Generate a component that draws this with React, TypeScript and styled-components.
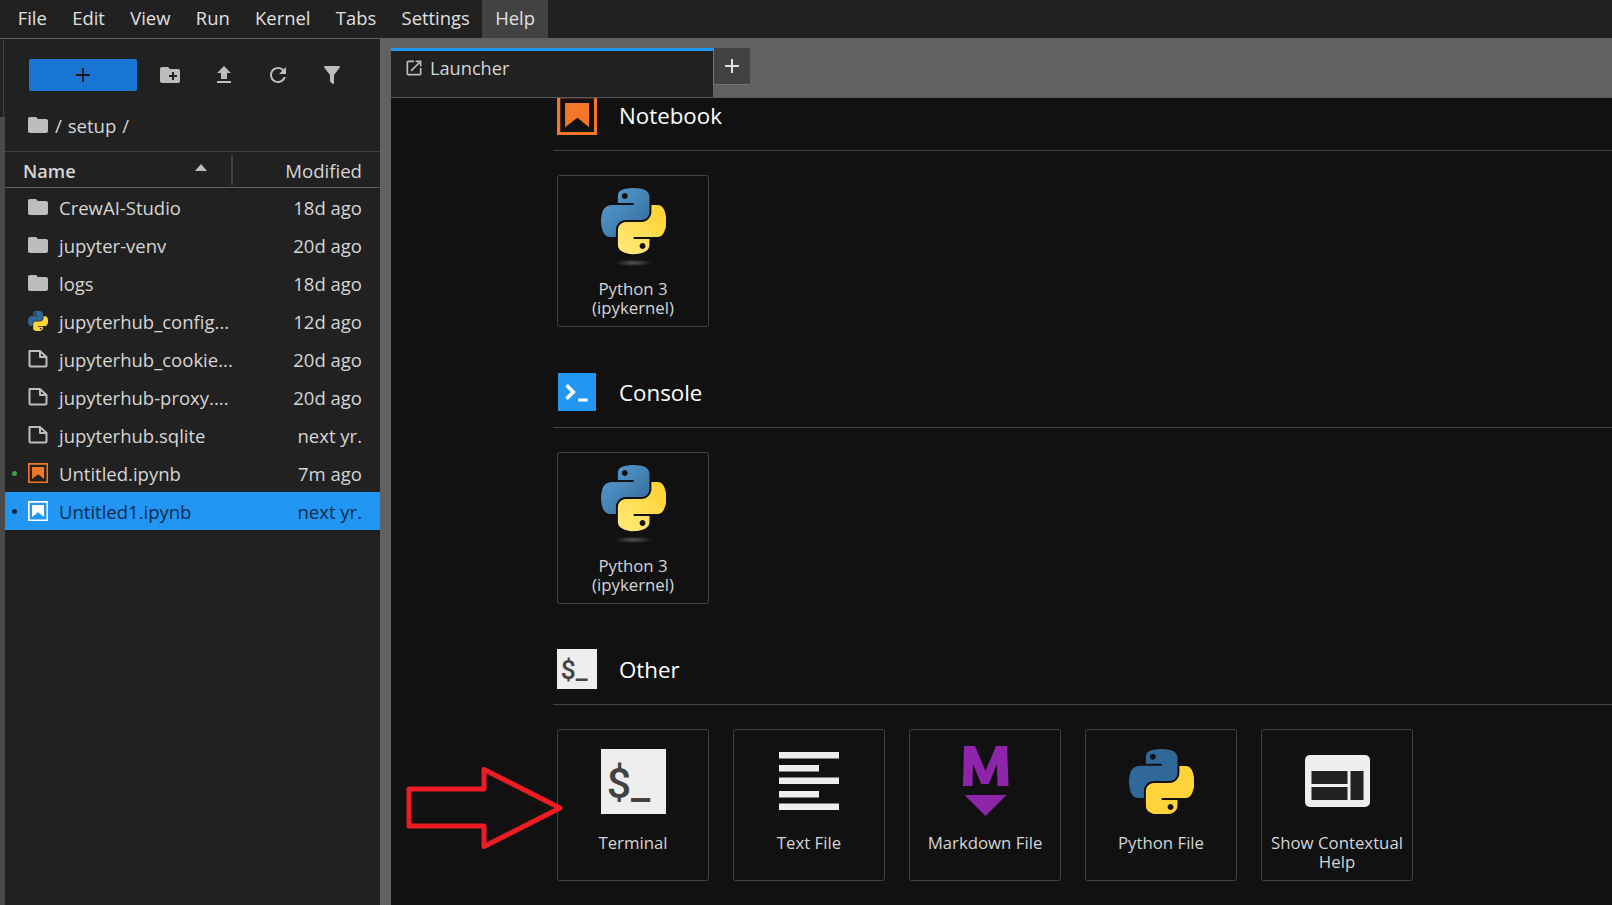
import React from "react";
import styled, { createGlobalStyle } from "styled-components";

const FONT = `"Open Sans", "Noto Sans", sans-serif`;

const Global = createGlobalStyle`
  html, body { margin: 0; padding: 0; background: #111; }
  body { font-family: ${FONT}; }
  #root { width: 1612px; height: 905px; overflow: hidden; }
  * { box-sizing: border-box; }
`;

const Page = styled.div`
  position: relative;
  width: 1612px;
  height: 905px;
  display: flex;
  flex-direction: column;
  background: #616161;
  overflow: hidden;
`;

const MenuBar = styled.div`
  height: 39px;
  flex: none;
  display: flex;
  padding-left: 5px;
  background: #212121;
  border-bottom: 1px solid #616161;
`;

const MenuItem = styled.div<{ $active?: boolean }>`
  height: 38px;
  line-height: 36px;
  padding: 0 12.7px;
  font-size: 18.4px;
  color: #e0e0e0;
  background: ${(p) => (p.$active ? "#424242" : "transparent")};
`;

const Body = styled.div`
  flex: 1;
  display: flex;
  min-height: 0;
`;

const Gutter = styled.div`
  width: 5px;
  flex: none;
  background: #212121;
  display: flex;
  flex-direction: column;
`;

const GutterLine = styled.div`
  width: 1px;
  height: 78px;
  flex: none;
  margin-left: 3px;
  background: #424242;
`;

const GutterStrip = styled.div`
  flex: 1;
  background: #4a4a4a;
`;

const Sidebar = styled.aside`
  width: 375px;
  flex: none;
  background: #212121;
  display: flex;
  flex-direction: column;
`;

const SideToolbar = styled.div`
  height: 72px;
  flex: none;
  padding: 20px 0 0 24px;
  display: flex;
  align-items: flex-start;
`;

const NewButton = styled.div`
  width: 108px;
  height: 32px;
  border-radius: 2px;
  background: #1976d2;
  display: flex;
  align-items: center;
  justify-content: center;
  margin-right: 6px;
`;

const ToolIcon = styled.div`
  width: 54px;
  height: 32px;
  display: flex;
  align-items: center;
  justify-content: center;
  flex: none;
`;

const Crumbs = styled.div`
  height: 41px;
  flex: none;
  padding: 0 0 12px 21px;
  display: flex;
  align-items: center;
  gap: 5px;
  font-size: 18.6px;
  word-spacing: 1px;
  color: #d5d5d5;
  border-bottom: 1px solid #424242;
`;

const ListHead = styled.div`
  height: 36px;
  flex: none;
  display: flex;
  align-items: center;
  padding-top: 2px;
  font-size: 18.6px;
  color: #d5d5d5;
  border-bottom: 1px solid #616161;
`;

const NameHead = styled.div`
  width: 228px;
  height: 29px;
  flex: none;
  padding: 0 24px 0 18px;
  display: flex;
  align-items: center;
  justify-content: space-between;
  font-weight: 600;
  font-size: 18.2px;
  border-right: 2px solid #424242;
`;

const Caret = styled.div`
  width: 0;
  height: 0;
  border-left: 6.5px solid transparent;
  border-right: 6.5px solid transparent;
  border-bottom: 7px solid #bdbdbd;
  margin-top: -6px;
`;

const ModifiedHead = styled.div`
  flex: 1;
  text-align: right;
  padding-right: 18px;
`;

const Row = styled.div<{ $selected?: boolean }>`
  height: 38px;
  display: flex;
  align-items: center;
  font-size: 18.5px;
  color: ${(p) => (p.$selected ? "#0b2a4a" : "#d5d5d5")};
  background: ${(p) => (p.$selected ? "#2196f3" : "transparent")};
`;

const Dot = styled.div<{ $color?: string }>`
  width: 5px;
  height: 5px;
  border-radius: 50%;
  margin-left: 7px;
  flex: none;
  background: ${(p) => p.$color || "transparent"};
`;

const RowIcon = styled.div`
  width: 24px;
  height: 24px;
  margin-left: 9px;
  margin-right: 9px;
  flex: none;
  display: flex;
  align-items: center;
  justify-content: center;
`;

const RowName = styled.div`
  flex: 1;
  min-width: 0;
  padding-top: 1px;
  white-space: nowrap;
`;

const RowTime = styled.div`
  flex: none;
  padding: 1px 18px 0 0;
`;

const Splitter = styled.div`
  width: 11px;
  flex: none;
  background: #616161;
`;

const Main = styled.main`
  flex: 1;
  min-width: 0;
  display: flex;
  flex-direction: column;
`;

const TabBar = styled.div`
  height: 59px;
  flex: none;
  padding-top: 9px;
  display: flex;
  align-items: flex-start;
  background: #616161;
  border-bottom: 1px solid #5a5a5a;
`;

const Tab = styled.div`
  width: 322px;
  height: 49px;
  background: #212121;
  border-top: 3px solid #2196f3;
  display: flex;
  align-items: center;
  padding: 0 0 12px 13px;
  gap: 6px;
  font-size: 18.2px;
  color: #d5d5d5;
`;

const AddTab = styled.div`
  width: 37px;
  height: 37px;
  background: #424242;
  border-left: 1px solid #757575;
  border-bottom: 1px solid #757575;
  display: flex;
  align-items: center;
  justify-content: center;
`;

const Launcher = styled.div`
  flex: 1;
  min-height: 0;
  overflow: hidden;
  background: #111;
  padding-left: 162px;
`;

const Sections = styled.div`
  margin-top: -3px;
  display: flex;
  flex-direction: column;
  gap: 45px;
`;

const Section = styled.section``;

const SectionHead = styled.div`
  display: flex;
  align-items: center;
  padding: 0 0 15px 4px;
  border-bottom: 1px solid #424242;
`;

const SectionIcon = styled.div`
  width: 40px;
  height: 40px;
  flex: none;
  display: flex;
  align-items: center;
  justify-content: center;
  margin-right: 22px;
`;

const SectionTitle = styled.h2`
  margin: 0;
  padding-top: 2px;
  font-size: 22.3px;
  font-weight: 400;
  color: #fff;
  line-height: 38px;
`;

const Cards = styled.div`
  display: flex;
  gap: 24px;
  padding: 24px 0 0 4px;
`;

const Card = styled.div`
  width: 152px;
  height: 152px;
  flex: none;
  border: 1px solid #424242;
  border-radius: 3px;
  background: #111;
  display: flex;
  flex-direction: column;
  align-items: center;
  padding-top: 12px;
`;

const CardArt = styled.div<{ $top?: boolean }>`
  height: 78px;
  width: 100%;
  flex: none;
  display: flex;
  align-items: ${(p) => (p.$top ? "flex-start" : "center")};
  justify-content: center;
`;

const CardLabel = styled.div`
  margin-top: 13px;
  text-align: center;
  font-size: 16.8px;
  line-height: 19px;
  color: #d5d5d5;
`;

const TerminalGlyph = styled.div<{ $size: number }>`
  width: ${(p) => p.$size}px;
  height: ${(p) => p.$size}px;
  padding: ${(p) => p.$size * 0.07}px ${(p) => p.$size * 0.14}px 0 0;
  background: #eeeeee;
  color: #424242;
  display: flex;
  align-items: center;
  justify-content: center;
  font-family: "Roboto", sans-serif;
  font-weight: 500;
  font-size: ${(p) => p.$size * 0.66}px;
  line-height: 1;
`;

const Arrow = styled.svg`
  position: absolute;
  left: 400px;
  top: 760px;
`;

const PY_BLUE =
  "M54.9 0C50.3 0 46 .4 42.1 1.1 30.8 3.1 28.7 7.3 28.7 15v10.2h26.8v3.4H18.6c-7.8 0-14.6 4.7-16.7 13.6-2.5 10.2-2.6 16.6 0 27.3 1.9 7.9 6.5 13.6 14.2 13.6h9.2v-12.2c0-8.9 7.7-16.7 16.8-16.7h26.8c7.4 0 13.4-6.1 13.4-13.6V15c0-7.3-6.1-12.7-13.4-13.9C64.3.3 59.5 0 54.9 0zM40.4 8.2c2.8 0 5 2.3 5 5.1 0 2.8-2.3 5.1-5 5.1-2.8 0-5-2.3-5-5.1 0-2.8 2.3-5.1 5-5.1z";
const PY_YELLOW =
  "M85.6 28.7v11.9c0 9.2-7.8 17-16.7 17H42.1c-7.3 0-13.4 6.3-13.4 13.6v25.5c0 7.3 6.3 11.5 13.4 13.6 8.5 2.5 16.6 2.9 26.8 0 6.8-2 13.4-5.9 13.4-13.6V86.5H55.5v-3.4h40.2c7.8 0 10.7-5.4 13.4-13.6 2.8-8.4 2.7-16.5 0-27.2-1.9-7.8-5.6-13.6-13.4-13.6H85.6zM70.6 93.3c2.8 0 5 2.3 5 5.1 0 2.8-2.3 5.1-5 5.1-2.8 0-5-2.3-5-5.1 0-2.8 2.3-5.1 5-5.1z";

let gradId = 0;
const PythonLogo = ({ size, flat, shadow }: { size: number; flat?: boolean; shadow?: boolean }) => {
  const id = React.useMemo(() => `py${gradId++}`, []);
  const h = shadow ? size * 1.28 : size;
  return (
    <svg width={size} height={h} viewBox={`0 0 110.4 ${shadow ? 141 : 110.4}`}>
      <defs>
        <linearGradient id={`${id}b`} x1="0" y1="0" x2="1" y2="1">
          <stop offset="0" stopColor="#5a9fd4" />
          <stop offset="1" stopColor="#306998" />
        </linearGradient>
        <linearGradient id={`${id}y`} x1="0.2" y1="0.9" x2="0.8" y2="0.2">
          <stop offset="0" stopColor="#ffe873" />
          <stop offset="1" stopColor="#ffd43b" />
        </linearGradient>
        <radialGradient id={`${id}s`}>
          <stop offset="0" stopColor="#555" />
          <stop offset="1" stopColor="#111" />
        </radialGradient>
      </defs>
      <path d={PY_BLUE} fill={flat ? "#306998" : `url(#${id}b)`} />
      <path d={PY_YELLOW} fill={flat ? "#ffd43b" : `url(#${id}y)`} />
      {shadow && <ellipse cx="55" cy="127" rx="32" ry="6" fill={`url(#${id}s)`} />}
    </svg>
  );
};

const Icon = ({ d, size = 24, color = "#bdbdbd" }: { d: string; size?: number; color?: string }) => (
  <svg width={size} height={size} viewBox="0 0 24 24" fill={color}>
    <path d={d} />
  </svg>
);

const FOLDER = "M10 4H4c-1.1 0-2 .9-2 2v12c0 1.1.9 2 2 2h16c1.1 0 2-.9 2-2V8c0-1.1-.9-2-2-2h-8l-2-2z";

const FileGlyph = () => (
  <svg width="22" height="22" viewBox="0 0 22 22" fill="none" stroke="#bdbdbd" strokeWidth="2" strokeLinejoin="round">
    <path d="M2.5 3h10.500l6.500 6v8.500a1 1 0 0 1-1 1H3.500a1 1 0 0 1-1-1z" />
    <path d="M13 3v6h6.500" />
  </svg>
);

const NotebookGlyph = ({ size, color }: { size: number; color: string }) => (
  <svg width={size} height={size} viewBox="1.8 1.8 18.3 18.3" fill={color}>
    <path d="M18.7 3.3v15.4H3.3V3.3h15.4m1.5-1.5H1.8v18.3h18.3l.1-18.3z" />
    <path d="M16.5 16.5l-5.4-4.3-5.6 4.3v-11h11z" />
  </svg>
);

const ConsoleGlyph = () => (
  <svg width="38" height="38" viewBox="20 20 160 160">
    <rect x="20" y="20" width="160" height="160" fill="#2196f3" />
    <path fill="#fff" d="M105 127.3h40v12.8h-40zM51.1 77L74 99.9l-23.3 23.3 10.5 10.5 23.3-23.3L95 99.9 84.5 89.4 61.6 66.5z" />
  </svg>
);

const TextFileGlyph = () => (
  <svg width="65" height="65" viewBox="0 0 65 65" fill="#eeeeee">
    <rect x="2" y="3" width="60" height="6.500" />
    <rect x="2" y="16" width="40" height="6.500" />
    <rect x="2" y="28.500" width="60" height="6.500" />
    <rect x="2" y="42" width="40" height="6.500" />
    <rect x="2" y="54.500" width="60" height="6.500" />
  </svg>
);

const MarkdownGlyph = () => (
  <svg width="65" height="72" viewBox="0 0 65 72" fill="#8e24aa">
    <path d="M11 1h11l10.500 25L43 1h11l1.500 40h-11l-.6-22-8 20h-7.800l-8-20-.6 22H10z" />
    <path d="M11.500 50h42l-21 21z" />
  </svg>
);

const HelpGlyph = () => (
  <svg width="65" height="52" viewBox="0 0 65 52">
    <rect width="65" height="52" rx="5" fill="#eeeeee" />
    <g fill="#212121">
      <rect x="6.500" y="16" width="36" height="13" />
      <rect x="6.500" y="32" width="36" height="13" />
      <rect x="45.500" y="16" width="13" height="29" />
    </g>
  </svg>
);

const files: { kind: string; name: string; time: string; dot?: string; selected?: boolean }[] = [
  { kind: "folder", name: "CrewAI-Studio", time: "18d ago" },
  { kind: "folder", name: "jupyter-venv", time: "20d ago" },
  { kind: "folder", name: "logs", time: "18d ago" },
  { kind: "py", name: "jupyterhub_config...", time: "12d ago" },
  { kind: "file", name: "jupyterhub_cookie...", time: "20d ago" },
  { kind: "file", name: "jupyterhub-proxy....", time: "20d ago" },
  { kind: "file", name: "jupyterhub.sqlite", time: "next yr." },
  { kind: "nb", name: "Untitled.ipynb", time: "7m ago", dot: "#43a047" },
  { kind: "nbsel", name: "Untitled1.ipynb", time: "next yr.", dot: "#0b2a4a", selected: true },
];

const fileIcon = (kind: string) => {
  switch (kind) {
    case "folder":
      return <Icon d={FOLDER} />;
    case "py":
      return <PythonLogo size={20} flat />;
    case "file":
      return <FileGlyph />;
    case "nb":
      return <NotebookGlyph size={20} color="#f37726" />;
    default:
      return <NotebookGlyph size={20} color="#fff" />;
  }
};

const menus = ["File", "Edit", "View", "Run", "Kernel", "Tabs", "Settings", "Help"];

export default function App() {
  return (
    <Page>
      <Global />
      <MenuBar>
        {menus.map((m) => (
          <MenuItem key={m} $active={m === "Help"}>
            {m}
          </MenuItem>
        ))}
      </MenuBar>
      <Body>
        <Gutter>
          <GutterLine />
          <GutterStrip />
        </Gutter>
        <Sidebar>
          <SideToolbar>
            <NewButton>
              <Icon size={24} color="#1a1a1a" d="M19 13h-6v6h-2v-6H5v-2h6V5h2v6h6v2z" />
            </NewButton>
            <ToolIcon>
              <Icon d="M20 6h-8l-2-2H4c-1.1 0-2 .9-2 2v12c0 1.1.9 2 2 2h16c1.1 0 2-.9 2-2V8c0-1.1-.9-2-2-2zm-1 8h-3v3h-2v-3h-3v-2h3V9h2v3h3v2z" />
            </ToolIcon>
            <ToolIcon>
              <Icon d="M9 16h6v-6h4l-7-7-7 7h4zm-4 2h14v2H5z" />
            </ToolIcon>
            <ToolIcon>
              <Icon d="M17.65 6.35C16.2 4.9 14.21 4 12 4c-4.42 0-7.99 3.58-7.99 8s3.57 8 7.99 8c3.73 0 6.84-2.55 7.73-6h-2.08c-.82 2.33-3.04 4-5.65 4-3.31 0-6-2.69-6-6s2.69-6 6-6c1.66 0 3.14.69 4.22 1.78L13 11h7V4l-2.35 2.35z" />
            </ToolIcon>
            <ToolIcon>
              <Icon d="M14 12v7.88c.04.3-.06.62-.29.83-.39.39-1.02.39-1.41 0l-2.01-2.01c-.23-.23-.33-.54-.29-.83V12h-.03L4.21 4.62c-.34-.43-.26-1.06.17-1.4C4.57 3.08 4.78 3 5 3h14c.22 0 .43.08.62.22.43.34.51.97.17 1.4L14.03 12H14z" />
            </ToolIcon>
          </SideToolbar>
          <Crumbs>
            <Icon d={FOLDER} />
            <span>/ setup /</span>
          </Crumbs>
          <ListHead>
            <NameHead>
              Name
              <Caret />
            </NameHead>
            <ModifiedHead>Modified</ModifiedHead>
          </ListHead>
          {files.map((f) => (
            <Row key={f.name} $selected={f.selected}>
              <Dot $color={f.dot} />
              <RowIcon>{fileIcon(f.kind)}</RowIcon>
              <RowName>{f.name}</RowName>
              <RowTime>{f.time}</RowTime>
            </Row>
          ))}
        </Sidebar>
        <Splitter />
        <Main>
          <TabBar>
            <Tab>
              <Icon
                size={20}
                d="M19 19H5V5h7V3H5a2 2 0 0 0-2 2v14a2 2 0 0 0 2 2h14c1.100 0 2-.9 2-2v-7h-2v7zM14 3v2h3.590l-9.830 9.830 1.410 1.410L19 6.410V10h2V3h-7z"
              />
              Launcher
            </Tab>
            <AddTab>
              <Icon size={24} color="#e0e0e0" d="M19 13h-6v6h-2v-6H5v-2h6V5h2v6h6v2z" />
            </AddTab>
          </TabBar>
          <Launcher>
            <Sections>
              <Section>
                <SectionHead>
                  <SectionIcon>
                    <NotebookGlyph size={40} color="#f37726" />
                  </SectionIcon>
                  <SectionTitle>Notebook</SectionTitle>
                </SectionHead>
                <Cards>
                  <Card>
                    <CardArt $top>
                      <PythonLogo size={65} shadow />
                    </CardArt>
                    <CardLabel>
                      Python 3
                      <br />
                      (ipykernel)
                    </CardLabel>
                  </Card>
                </Cards>
              </Section>
              <Section>
                <SectionHead>
                  <SectionIcon>
                    <ConsoleGlyph />
                  </SectionIcon>
                  <SectionTitle>Console</SectionTitle>
                </SectionHead>
                <Cards>
                  <Card>
                    <CardArt $top>
                      <PythonLogo size={65} shadow />
                    </CardArt>
                    <CardLabel>
                      Python 3
                      <br />
                      (ipykernel)
                    </CardLabel>
                  </Card>
                </Cards>
              </Section>
              <Section>
                <SectionHead>
                  <SectionIcon>
                    <TerminalGlyph $size={40}>$_</TerminalGlyph>
                  </SectionIcon>
                  <SectionTitle>Other</SectionTitle>
                </SectionHead>
                <Cards>
                  <Card>
                    <CardArt>
                      <TerminalGlyph $size={65}>$_</TerminalGlyph>
                    </CardArt>
                    <CardLabel>Terminal</CardLabel>
                  </Card>
                  <Card>
                    <CardArt>
                      <TextFileGlyph />
                    </CardArt>
                    <CardLabel>Text File</CardLabel>
                  </Card>
                  <Card>
                    <CardArt>
                      <MarkdownGlyph />
                    </CardArt>
                    <CardLabel>Markdown File</CardLabel>
                  </Card>
                  <Card>
                    <CardArt>
                      <PythonLogo size={65} flat />
                    </CardArt>
                    <CardLabel>Python File</CardLabel>
                  </Card>
                  <Card>
                    <CardArt>
                      <HelpGlyph />
                    </CardArt>
                    <CardLabel>
                      Show Contextual
                      <br />
                      Help
                    </CardLabel>
                  </Card>
                </Cards>
              </Section>
            </Sections>
          </Launcher>
        </Main>
      </Body>
      <Arrow width="170" height="100" viewBox="0 0 170 100" fill="none">
        <path
          d="M9 29H84V9.500L160 48 84 86.500V66H9z"
          stroke="#ed1c24"
          strokeWidth="5"
          strokeLinejoin="round"
        />
      </Arrow>
    </Page>
  );
}
